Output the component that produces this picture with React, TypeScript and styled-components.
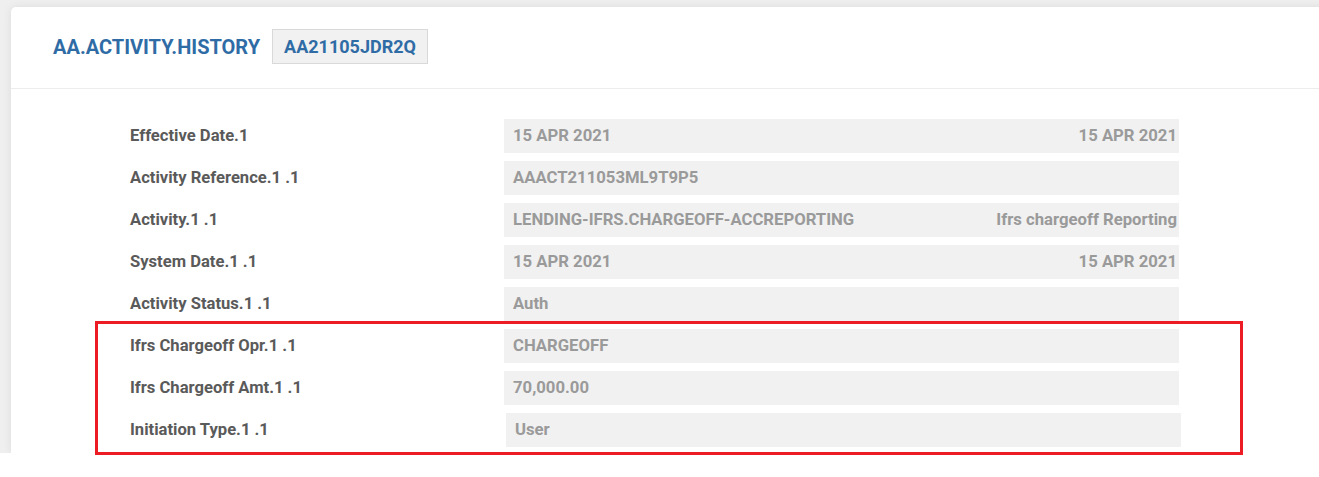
import React from "react";
import styled, { createGlobalStyle } from "styled-components";

const GlobalStyle = createGlobalStyle`
  html, body { margin: 0; padding: 0; background: #ffffff; }
  body { font-family: Roboto, "Liberation Sans", Arial, sans-serif; }
  * { box-sizing: border-box; }
`;

const Screen = styled.div`
  position: relative;
  width: 1319px;
  height: 477px;
  overflow: hidden;
  background: #ffffff;
`;

const Backdrop = styled.div`
  height: 453px;
  background: #efefef;
  padding: 7px 0 0 11px;
  overflow: hidden;
`;

const Card = styled.div`
  width: 1330px;
  height: 100%;
  background: #ffffff;
  border-radius: 5px 0 0 0;
  box-shadow: 0 0 10px rgba(0, 0, 0, 0.08);
`;

const Header = styled.div`
  height: 82px;
  display: flex;
  align-items: center;
  gap: 12px;
  padding: 0 0 2px 42px;
  border-bottom: 1px solid #ececec;
`;

const Title = styled.h1`
  margin: 0;
  font-size: 20px;
  font-weight: 700;
  color: #2f6ca6;
  letter-spacing: 0;
`;

const Badge = styled.span`
  display: inline-flex;
  align-items: center;
  height: 35px;
  padding: 0 11px;
  background: #f1f1f1;
  border: 1px solid #d9d9d9;
  font-size: 18px;
  font-weight: 700;
  color: #2f6ca6;
`;

const Body = styled.div`
  padding: 30px 0 0 119px;
  display: grid;
  grid-template-columns: 374px 675px;
  row-gap: 8px;
`;

const Label = styled.div`
  display: flex;
  align-items: center;
  height: 34px;
  padding-bottom: 2px;
  font-size: 16.6px;
  font-weight: 700;
  color: #5a5a5a;
`;

const ValueBox = styled.div<{ $shift?: number }>`
  display: flex;
  align-items: center;
  justify-content: space-between;
  height: 34px;
  padding: 0 2px 1px 9px;
  margin-left: ${(p) => p.$shift ?? 0}px;
  margin-right: ${(p) => -(p.$shift ?? 0)}px;
  background: #f1f1f1;
  font-size: 16.7px;
  font-weight: 700;
  color: #9a9a9a;
`;

const Highlight = styled.div`
  position: absolute;
  left: 95px;
  top: 321px;
  width: 1148px;
  height: 134px;
  border: 3px solid #ed1c24;
  pointer-events: none;
`;

type Row = { label: string; value: string; extra?: string; shift?: number };

const rows: Row[] = [
  { label: "Effective Date.1", value: "15 APR 2021", extra: "15 APR 2021" },
  { label: "Activity Reference.1 .1", value: "AAACT211053ML9T9P5" },
  {
    label: "Activity.1 .1",
    value: "LENDING-IFRS.CHARGEOFF-ACCREPORTING",
    extra: "Ifrs chargeoff Reporting",
  },
  { label: "System Date.1 .1", value: "15 APR 2021", extra: "15 APR 2021" },
  { label: "Activity Status.1 .1", value: "Auth" },
  { label: "Ifrs Chargeoff Opr.1 .1", value: "CHARGEOFF" },
  { label: "Ifrs Chargeoff Amt.1 .1", value: "70,000.00" },
  { label: "Initiation Type.1 .1", value: "User", shift: 2 },
];

export default function App() {
  return (
    <Screen>
      <GlobalStyle />
      <Backdrop>
        <Card>
          <Header>
            <Title>AA.ACTIVITY.HISTORY</Title>
            <Badge>AA21105JDR2Q</Badge>
          </Header>
          <Body>
            {rows.map((r) => (
              <React.Fragment key={r.label}>
                <Label>{r.label}</Label>
                <ValueBox $shift={r.shift}>
                  <span>{r.value}</span>
                  {r.extra && <span>{r.extra}</span>}
                </ValueBox>
              </React.Fragment>
            ))}
          </Body>
        </Card>
      </Backdrop>
      <Highlight />
    </Screen>
  );
}
